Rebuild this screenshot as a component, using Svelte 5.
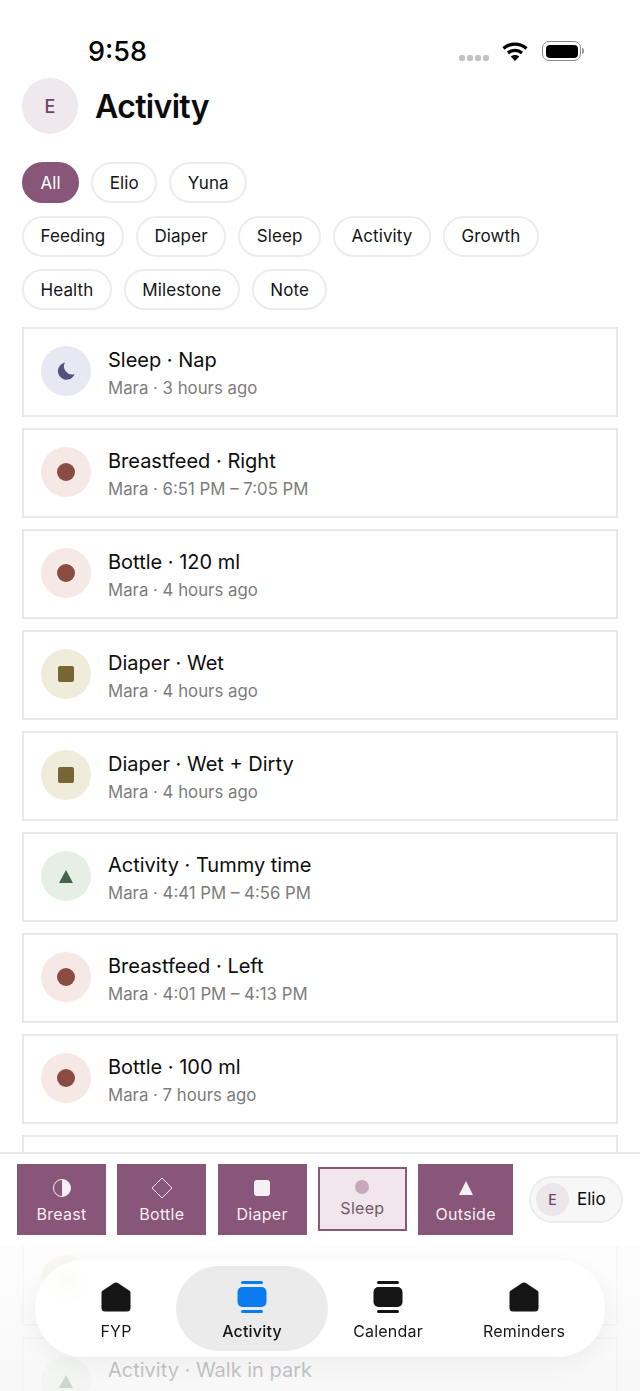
<script>
  const filters = [
    [{ label: 'All', active: true }, { label: 'Elio' }, { label: 'Yuna' }],
    [{ label: 'Feeding' }, { label: 'Diaper' }, { label: 'Sleep' }, { label: 'Activity' }, { label: 'Growth' }],
    [{ label: 'Health' }, { label: 'Milestone' }, { label: 'Note' }]
  ];

  const entries = [
    { kind: 'sleep', title: 'Sleep · Nap', sub: 'Mara · 3 hours ago' },
    { kind: 'feed', title: 'Breastfeed · Right', sub: 'Mara · 6:51 PM – 7:05 PM' },
    { kind: 'feed', title: 'Bottle · 120 ml', sub: 'Mara · 4 hours ago' },
    { kind: 'diaper', title: 'Diaper · Wet', sub: 'Mara · 4 hours ago' },
    { kind: 'diaper', title: 'Diaper · Wet + Dirty', sub: 'Mara · 4 hours ago' },
    { kind: 'activity', title: 'Activity · Tummy time', sub: 'Mara · 4:41 PM – 4:56 PM' },
    { kind: 'feed', title: 'Breastfeed · Left', sub: 'Mara · 4:01 PM – 4:13 PM' },
    { kind: 'feed', title: 'Bottle · 100 ml', sub: 'Mara · 7 hours ago' },
    // these rows sit behind the bottom bars, their text never shows
    { kind: 'feed', title: '', sub: '' },
    { kind: 'diaper', title: '', sub: '' },
    { kind: 'activity', title: 'Activity · Walk in park', sub: '' }
  ];

  const tabs = [
    { label: 'FYP', icon: 'home' },
    { label: 'Activity', icon: 'stack', active: true },
    { label: 'Calendar', icon: 'stack' },
    { label: 'Reminders', icon: 'home' }
  ];
</script>

<div class="screen">
  <div class="status">
    <span class="time">9:58</span>
    <div class="status-right">
      <div class="signal"><i></i><i></i><i></i><i></i></div>
      <svg width="28" height="22" viewBox="0 0 28 22" fill="none" stroke="#000" stroke-width="3.2">
        <path d="M2.5 8.5C9 2.6 19 2.6 25.5 8.5" />
        <path d="M7 13C11 9.6 17 9.6 21 13" />
        <path d="M14 21l-4.2-4.4c2.4-2 6-2 8.4 0z" fill="#000" stroke="none" />
      </svg>
      <div class="battery"><div class="cell"></div></div>
      <div class="nub"></div>
    </div>
  </div>

  <header>
    <div class="avatar">E</div>
    <h1>Activity</h1>
  </header>

  <div class="filters">
    {#each filters as row}
      <div class="filter-row">
        {#each row as chip}
          <button class="chip" class:active={chip.active}>{chip.label}</button>
        {/each}
      </div>
    {/each}
  </div>

  <div class="list">
    {#each entries as entry}
      <div class="card">
        <div class="badge {entry.kind}">
          {#if entry.kind === 'sleep'}
            <svg width="22" height="22" viewBox="0 0 22 22">
              <path d="M10 2.6A8.6 8.6 0 1 0 19.6 14 A8 8 0 0 1 10 2.6z" fill="#56507f" />
            </svg>
          {:else if entry.kind === 'feed'}
            <span class="dot"></span>
          {:else if entry.kind === 'diaper'}
            <span class="square"></span>
          {:else}
            <span class="tri"></span>
          {/if}
        </div>
        <div class="text">
          <div class="title">{entry.title}</div>
          <div class="sub">{entry.sub}</div>
        </div>
      </div>
    {/each}
  </div>

  <div class="overlay">
    <div class="quick">
      <button class="q">
        <span class="q-icon">
          <svg width="20" height="20" viewBox="0 0 20 20">
            <circle cx="10" cy="10" r="8.5" fill="none" stroke="#f3e9f0" stroke-width="1" />
            <path d="M10 1.5a8.5 8.5 0 0 1 0 17z" fill="#f6eff4" />
          </svg>
        </span>
        <span>Breast</span>
      </button>
      <button class="q">
        <span class="q-icon">
          <svg width="22" height="22" viewBox="0 0 22 22">
            <path d="M11 1l10 10-10 10L1 11z" fill="none" stroke="#f3e0ec" stroke-width="1" />
          </svg>
        </span>
        <span>Bottle</span>
      </button>
      <button class="q">
        <span class="q-icon"><span class="q-square"></span></span>
        <span>Diaper</span>
      </button>
      <button class="q pressed">
        <span class="q-icon"><span class="q-dot"></span></span>
        <span>Sleep</span>
      </button>
      <button class="q wide">
        <span class="q-icon"><span class="q-tri"></span></span>
        <span>Outside</span>
      </button>
      <div class="person">
        <span class="mini">E</span>
        <span>Elio</span>
      </div>
    </div>

    <div class="fade">
      <nav>
        {#each tabs as tab}
          <div class="tab" class:active={tab.active}>
            {#if tab.icon === 'home'}
              <svg class="home" width="30" height="30" viewBox="0 0 30 30">
                <path d="M12.8 1.2L1.8 8.4Q0.5 9.3 0.5 10.8V26Q0.5 29.6 4 29.6H26Q29.5 29.6 29.5 26V10.8Q29.5 9.3 28.2 8.4L17.2 1.2Q15 -0.2 12.8 1.2z" fill="currentColor" />
              </svg>
            {:else}
              <svg width="30" height="32" viewBox="0 0 30 32" fill="currentColor">
                <rect x="4" y="0" width="22" height="3" rx="1.5" />
                <rect x="0.5" y="6" width="29" height="20" rx="5" />
                <rect x="4" y="29" width="22" height="3" rx="1.5" />
              </svg>
            {/if}
            <span>{tab.label}</span>
          </div>
        {/each}
      </nav>
    </div>
  </div>
</div>

<style>
  :global(body) {
    background: #fff;
  }

  .screen {
    position: relative;
    width: 640px;
    height: 1391px;
    overflow: hidden;
    background: #fff;
    font-family: Inter, 'Liberation Sans', sans-serif;
    color: #0b0b0b;
  }

  button {
    font-family: inherit;
  }

  .status {
    display: flex;
    justify-content: space-between;
    align-items: center;
    height: 32px;
    padding: 35px 56px 1px 88px;
  }

  .time {
    font-size: 27px;
    font-weight: 500;
    color: #000;
  }

  .status-right {
    display: flex;
    align-items: center;
  }

  .signal {
    display: flex;
    gap: 2px;
    margin-top: 14px;
    margin-right: 12px;
  }

  .signal i {
    width: 6px;
    height: 6px;
    border-radius: 2px;
    background: #c4c4c4;
  }

  .battery {
    width: 39px;
    height: 20px;
    margin-left: 13px;
    padding: 2.5px;
    box-sizing: border-box;
    border: 1.5px solid #8a8a8a;
    border-radius: 7px;
    background: #fff;
  }

  .cell {
    width: 100%;
    height: 100%;
    border-radius: 4px;
    background: #000;
  }

  .nub {
    width: 2px;
    height: 6px;
    margin-left: 1px;
    border-radius: 0 2px 2px 0;
    background: #9a9a9a;
  }

  header {
    display: flex;
    align-items: center;
    gap: 17px;
    margin-top: 10px;
    padding-left: 22px;
  }

  .avatar {
    display: flex;
    align-items: center;
    justify-content: center;
    width: 56px;
    height: 56px;
    border-radius: 50%;
    background: #efe9ed;
    color: #6f4462;
    font-size: 18px;
    font-weight: 500;
  }

  h1 {
    margin: 0;
    font-size: 32px;
    font-weight: 600;
    letter-spacing: -0.65px;
    color: #0b0b0b;
  }

  .filters {
    display: flex;
    flex-direction: column;
    gap: 12.5px;
    margin-top: 28px;
    padding-left: 22px;
  }

  .filter-row {
    display: flex;
    gap: 12px;
  }

  .chip {
    height: 41px;
    padding: 0 16.5px;
    border: 2px solid #ececec;
    border-radius: 21px;
    background: #fff;
    color: #141414;
    font-size: 17px;
    font-weight: 400;
    letter-spacing: 0.1px;
  }

  .chip.active {
    border-color: #875678;
    background: #875678;
    color: #fff;
  }

  .list {
    display: flex;
    flex-direction: column;
    gap: 11px;
    margin: 17px 22px 0;
  }

  .card {
    display: flex;
    align-items: center;
    gap: 17px;
    flex: none;
    height: 90px;
    box-sizing: border-box;
    padding: 0 17px;
    border: 2px solid #e9e9e9;
    background: #fff;
  }

  .badge {
    display: flex;
    align-items: center;
    justify-content: center;
    flex: none;
    width: 50px;
    height: 50px;
    margin-top: -2px;
    border-radius: 50%;
  }

  .badge.sleep { background: #e8e8f3; }
  .badge.feed { background: #f6e8e4; }
  .badge.diaper { background: #f0ecdc; }
  .badge.activity { background: #e6eee6; }

  .dot {
    width: 18px;
    height: 18px;
    border-radius: 50%;
    background: #8a4b42;
  }

  .square {
    width: 16px;
    height: 16px;
    border-radius: 2px;
    background: #776633;
  }

  .tri {
    width: 0;
    height: 0;
    border-left: 7px solid transparent;
    border-right: 7px solid transparent;
    border-bottom: 13px solid #43634a;
  }

  .text {
    padding-top: 2px;
  }

  .title {
    min-height: 26px;
    font-size: 20px;
    line-height: 26px;
    color: #0d0d0d;
  }

  .sub {
    min-height: 22px;
    margin-top: 4px;
    font-size: 16.8px;
    line-height: 22px;
    color: #7c7c7c;
  }

  .overlay {
    position: absolute;
    left: 0;
    right: 0;
    top: 1152px;
    bottom: 0;
    display: flex;
    flex-direction: column;
  }

  .quick {
    display: flex;
    align-items: center;
    gap: 11.3px;
    height: 94px;
    box-sizing: border-box;
    padding: 0 16px 2px 17px;
    border-top: 2px solid #e9e9e9;
    background: #fff;
  }

  .q {
    display: flex;
    flex-direction: column;
    align-items: center;
    justify-content: center;
    gap: 6.5px;
    flex: none;
    width: 89px;
    height: 71px;
    padding: 4px 0 0;
    border: none;
    background: #875678;
    color: #f7eef4;
    font-size: 16px;
    letter-spacing: 0.3px;
  }

  .q.wide {
    width: 95px;
  }

  .q.pressed {
    height: 64px;
    border: 2px solid #875678;
    background: #f0e6ec;
    color: #6f5a68;
    gap: 4.5px;
    padding: 0;
  }

  .q-icon {
    display: flex;
    align-items: center;
    justify-content: center;
    width: 22px;
    height: 20px;
  }

  .q.pressed .q-icon {
    height: 14px;
  }

  .q-square {
    width: 16px;
    height: 16px;
    border-radius: 3px;
    background: #f6eff4;
  }

  .q-dot {
    width: 14px;
    height: 14px;
    border-radius: 50%;
    background: #c5a9bb;
  }

  .q-tri {
    width: 0;
    height: 0;
    border-left: 7px solid transparent;
    border-right: 7px solid transparent;
    border-bottom: 14px solid #f6eff4;
  }

  .person {
    display: flex;
    align-items: center;
    gap: 8px;
    flex: none;
    width: 94px;
    height: 47px;
    margin-left: 4.5px;
    padding: 0 0 0 5px;
    box-sizing: border-box;
    border: 2px solid #ececec;
    border-radius: 24px;
    background: #f7f7f7;
    font-size: 17px;
  }

  .mini {
    display: flex;
    align-items: center;
    justify-content: center;
    width: 33px;
    height: 33px;
    border-radius: 50%;
    background: #ebe6ea;
    color: #6f4462;
    font-size: 14px;
    font-weight: 500;
  }

  .fade {
    flex: 1;
    padding: 14px 35px 0;
    background: linear-gradient(to bottom, rgba(252, 252, 252, 0.72), rgba(246, 246, 246, 0.78));
  }

  nav {
    display: grid;
    grid-template-columns: repeat(4, 1fr);
    align-items: center;
    height: 97px;
    box-sizing: border-box;
    padding: 0 13px;
    border-radius: 48px;
    background: rgba(255, 255, 255, 0.88);
    backdrop-filter: blur(4px);
    box-shadow: 0 8px 24px rgba(0, 0, 0, 0.05);
  }

  .tab {
    display: flex;
    flex-direction: column;
    align-items: center;
    justify-content: center;
    gap: 8px;
    height: 85px;
    padding-top: 4px;
    box-sizing: border-box;
    border-radius: 43px;
    color: #151515;
    font-size: 16px;
    letter-spacing: 0.2px;
  }

  .tab .home {
    margin: 1px 0;
  }

  .tab.active {
    margin: 0 -8px;
    background: #ebebeb;
    font-weight: 500;
  }

  .tab.active svg {
    color: #0a7cf0;
  }
</style>
